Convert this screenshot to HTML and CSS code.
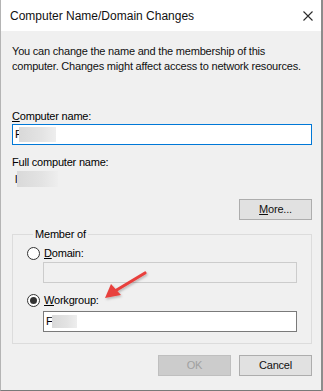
FILE: index.html
```html
<!DOCTYPE html>
<html lang="en">
<head>
  <meta charset="UTF-8">
  <title>Computer Name/Domain Changes</title>
  <link rel="stylesheet" href="styles.css">
</head>
<body>
  <div class="window">
    <div class="titlebar">
      <span class="title">Computer Name/Domain Changes</span>
      <svg class="close" width="10" height="10" viewBox="0 0 10 10">
        <path d="M0.5 0.5 L9.5 9.5 M9.5 0.5 L0.5 9.5" stroke="#2b2b2b" stroke-width="1.1" fill="none"/>
      </svg>
    </div>

    <div class="content">
      <p class="intro">You can change the name and the membership of this<br>computer. Changes might affect access to network resources.</p>

      <div class="label name-label"><u>C</u>omputer name:</div>
      <div class="textbox focused"><span class="first">F</span><span class="blur blur-name"></span></div>

      <div class="label full-label">Full computer name:</div>
      <div class="full-value"><span class="first">l</span><span class="blur blur-full"></span></div>

      <div class="more-row">
        <div class="button"><u>M</u>ore...</div>
      </div>

      <fieldset class="group">
        <legend>Member of</legend>
        <div class="radio-row">
          <span class="radio"></span>
          <span><u>D</u>omain:</span>
        </div>
        <div class="textbox disabled sub"></div>
        <div class="radio-row workgroup-row">
          <span class="radio checked"></span>
          <span><u>W</u>orkgroup:</span>
        </div>
        <div class="textbox plain sub wg-box"><span class="first">F</span><span class="blur blur-wg"></span></div>
      </fieldset>

      <div class="buttons">
        <div class="button disabled-btn">OK</div>
        <div class="button">Cancel</div>
      </div>
    </div>

    <svg class="arrow" width="60" height="40" viewBox="0 0 60 40">
      <defs>
        <filter id="shadow" x="-20%" y="-20%" width="140%" height="140%">
          <feDropShadow dx="1" dy="1.5" stdDeviation="1" flood-color="#000" flood-opacity="0.25"/>
        </filter>
      </defs>
      <g filter="url(#shadow)">
        <path d="M48 8 L18 26" stroke="#e8413d" stroke-width="3.2" stroke-linecap="round" fill="none"/>
        <path d="M8 33 L14 19 L24 30 Z" fill="#e8413d"/>
      </g>
    </svg>
  </div>
</body>
</html>
```

FILE: styles.css
```css
body {
  margin: 0;
  background: #8c8c8c;
  font-family: "Liberation Sans", Arial, sans-serif;
  font-size: 11px;
  letter-spacing: -0.2px;
  color: #000;
}
.window {
  position: relative;
  width: 321px;
  height: 391px;
  box-sizing: border-box;
  background: #f0f0f0;
  border-left: 1px solid #b4b4b4;
  border-bottom: 1px solid #7a7a7a;
  overflow: hidden;
}
.titlebar {
  height: 31px;
  background: #fff;
  display: flex;
  align-items: center;
  justify-content: space-between;
  padding: 0 8px 0 9px;
}
.title {
  font-size: 12px;
  letter-spacing: 0;
  color: #111;
  margin-top: 1px;
}
.close {
  margin-top: 1px;
}
.content {
  padding: 0 9px 0 11px;
  line-height: 15px;
}
.intro {
  margin: 13px 0 0;
  color: #111;
  white-space: nowrap;
}
.label {
  height: 15px;
}
.name-label {
  margin-top: 35px;
}
.full-label {
  margin-top: 10px;
}
.textbox {
  height: 21px;
  box-sizing: border-box;
  border: 1px solid #7a7a7a;
  background: #fff;
  display: flex;
  align-items: center;
  padding-left: 2px;
}
.textbox.focused {
  border-color: #0078d7;
}
.textbox.disabled {
  border-color: #cccccc;
  background: #f0f0f0;
}
.blur {
  display: block;
  height: 15px;
  margin-left: -3px;
  background: linear-gradient(90deg, #d9d9d9, #e3e3e3 60%, #eeeeee);
  filter: blur(0.6px);
}
.blur-name {
  width: 37px;
}
.full-value {
  display: flex;
  align-items: center;
  height: 16px;
  margin-top: 1px;
  padding-left: 3px;
}
.blur-full {
  width: 41px;
  height: 16px;
  margin-left: 0;
}
.blur-wg {
  width: 25px;
  height: 13px;
  margin-left: -1px;
}
.more-row {
  display: flex;
  justify-content: flex-end;
  margin-top: 12px;
}
.button {
  width: 73px;
  height: 21px;
  box-sizing: border-box;
  border: 1px solid #adadad;
  background: #e1e1e1;
  display: flex;
  align-items: center;
  justify-content: center;
  color: #111;
}
.disabled-btn {
  background: #cccccc;
  border-color: #bfbfbf;
  color: #a0a0a0;
}
.group {
  margin: 7px 0 0;
  padding: 4px 14px 11px 14px;
  border: 1px solid #dcdcdc;
}
.group legend {
  padding: 0 2px;
  margin-left: 6px;
  line-height: 15px;
}
.radio-row {
  display: flex;
  align-items: center;
  gap: 4px;
  height: 15px;
}
.workgroup-row {
  margin-top: 10px;
}
.radio {
  width: 13px;
  height: 13px;
  box-sizing: border-box;
  border: 1px solid #333;
  border-radius: 50%;
  background: #fff;
  display: flex;
  align-items: center;
  justify-content: center;
}
.radio.checked::after {
  content: "";
  width: 7px;
  height: 7px;
  border-radius: 50%;
  background: #333;
}
.sub {
  margin-left: 16px;
  margin-top: 1px;
}
.wg-box {
  margin-top: 3px;
}
.buttons {
  display: flex;
  justify-content: flex-end;
  gap: 8px;
  margin-top: 11px;
}
.arrow {
  position: absolute;
  left: 96px;
  top: 265px;
}
```
